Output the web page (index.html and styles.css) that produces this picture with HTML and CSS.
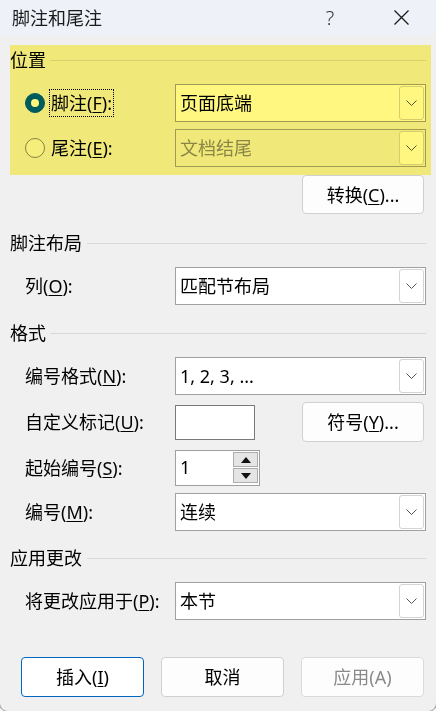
FILE: index.html
```html
<!DOCTYPE html>
<html lang="zh-CN">
<head>
<meta charset="utf-8">
<title>脚注和尾注</title>
<link rel="stylesheet" href="styles.css">
</head>
<body>
<div class="dialog">
  <div class="titlebar">
    <div class="title">脚注和尾注</div>
    <div class="help">?</div>
    <svg class="close" width="15" height="15" viewBox="0 0 15 15"><path d="M0.5 0.5 L14.5 14.5 M14.5 0.5 L0.5 14.5" stroke="#1a1a1a" stroke-width="1.3" fill="none"/></svg>
  </div>

  <div class="content">
    <div class="group highlight">
      <div class="heading"><span>位置</span><i class="rule"></i></div>
      <div class="row first">
        <div class="label radio-label">
          <span class="radio checked"></span>
          <span class="focus">脚注(<u>F</u>):</span>
        </div>
        <div class="combo"><span class="value">页面底端</span><span class="arrow"><svg width="11" height="6" viewBox="0 0 11 6"><polyline points="0.5,0.5 5.5,5.5 10.5,0.5" fill="none" stroke="#555" stroke-width="1"/></svg></span></div>
      </div>
      <div class="row">
        <div class="label radio-label">
          <span class="radio"></span>
          <span class="nofocus">尾注(<u>E</u>):</span>
        </div>
        <div class="combo disabled"><span class="value">文档结尾</span><span class="arrow"><svg width="11" height="6" viewBox="0 0 11 6"><polyline points="0.5,0.5 5.5,5.5 10.5,0.5" fill="none" stroke="#555" stroke-width="1"/></svg></span></div>
      </div>
    </div>

    <div class="btnrow"><button class="btn">转换(<u>C</u>)...</button></div>

    <div class="heading h2"><span>脚注布局</span><i class="rule"></i></div>
    <div class="row first">
      <div class="label">列(<u>O</u>):</div>
      <div class="combo"><span class="value">匹配节布局</span><span class="arrow"><svg width="11" height="6" viewBox="0 0 11 6"><polyline points="0.5,0.5 5.5,5.5 10.5,0.5" fill="none" stroke="#555" stroke-width="1"/></svg></span></div>
    </div>

    <div class="heading h3"><span>格式</span><i class="rule"></i></div>
    <div class="row first">
      <div class="label">编号格式(<u>N</u>):</div>
      <div class="combo"><span class="value">1, 2, 3, ...</span><span class="arrow"><svg width="11" height="6" viewBox="0 0 11 6"><polyline points="0.5,0.5 5.5,5.5 10.5,0.5" fill="none" stroke="#555" stroke-width="1"/></svg></span></div>
    </div>
    <div class="row mark">
      <div class="label">自定义标记(<u>U</u>):</div>
      <div class="textbox"></div>
      <button class="btn symbol">符号(<u>Y</u>)...</button>
    </div>
    <div class="row spinrow">
      <div class="label">起始编号(<u>S</u>):</div>
      <div class="spinner">
        <span class="value">1</span>
        <span class="spins">
          <span class="spin"><svg width="10" height="6" viewBox="0 0 10 6"><polygon points="0,6 10,6 5,0" fill="#111"/></svg></span>
          <span class="spin"><svg width="10" height="6" viewBox="0 0 10 6"><polygon points="0,0 10,0 5,6" fill="#111"/></svg></span>
        </span>
      </div>
    </div>
    <div class="row">
      <div class="label">编号(<u>M</u>):</div>
      <div class="combo"><span class="value">连续</span><span class="arrow"><svg width="11" height="6" viewBox="0 0 11 6"><polyline points="0.5,0.5 5.5,5.5 10.5,0.5" fill="none" stroke="#555" stroke-width="1"/></svg></span></div>
    </div>

    <div class="heading h4"><span>应用更改</span><i class="rule"></i></div>
    <div class="row first">
      <div class="label">将更改应用于(<u>P</u>):</div>
      <div class="combo"><span class="value">本节</span><span class="arrow"><svg width="11" height="6" viewBox="0 0 11 6"><polyline points="0.5,0.5 5.5,5.5 10.5,0.5" fill="none" stroke="#555" stroke-width="1"/></svg></span></div>
    </div>

    <div class="footer">
      <button class="btn fbtn default">插入(<u>I</u>)</button>
      <button class="btn fbtn">取消</button>
      <button class="btn fbtn disabled">应用(A)</button>
    </div>
  </div>
</div>
</body>
</html>
```

FILE: styles.css
```css
* { box-sizing: border-box; }
html, body { margin: 0; padding: 0; background: #f8f8f8; }
body {
  font-family: "Noto Sans", "Noto Sans CJK SC", sans-serif;
  font-size: 18px;
  line-height: 24px;
  color: #000;
}
u { text-decoration-thickness: 1px; text-underline-offset: 2px; }

.dialog {
  width: 436px;
  height: 711px;
  background: #f0f0f0;
  display: flex;
  flex-direction: column;
  border-radius: 0 0 8px 8px;
  box-shadow: 0 0 0 1px #a8a8a8;
  overflow: hidden;
}

.titlebar {
  height: 35px;
  background: #eef2f8;
  display: flex;
  align-items: center;
  padding-left: 12px;
  flex: none;
}
.title { flex: 1; color: #1a1a1a; }
.help {
  width: 12px;
  text-align: center;
  font-size: 20px;
  font-weight: 300;
  color: #333;
  font-family: "Noto Sans", sans-serif;
}
.close { margin-left: 58px; margin-right: 27px; display: block; }

.content {
  padding: 0 10px;
  display: flex;
  flex-direction: column;
}

.group { position: relative; margin-top: 10px; padding: 3px 0 8px; }
.highlight::after {
  content: "";
  position: absolute;
  left: 0; right: -5px; top: 0; bottom: 0;
  background: #fff780;
  mix-blend-mode: multiply;
  pointer-events: none;
}

.heading {
  display: flex;
  align-items: center;
  gap: 4px;
  height: 24px;
}
.heading .rule { flex: 1; height: 1px; background: #d8d8d8; display: block; }
.h2 { margin-top: 17px; gap: 5px; }
.h3 { margin-top: 16px; }
.h4 { margin-top: 15px; gap: 5px; }

.row {
  display: flex;
  align-items: center;
  margin-top: 7px;
}
.row.first { margin-top: 12px; }
.label {
  width: 165px;
  padding-left: 15px;
  flex: none;
  white-space: nowrap;
}
.radio-label { display: flex; align-items: center; }
.radio {
  width: 20px; height: 20px;
  border-radius: 50%;
  border: 1px solid #868686;
  background: #f6f6f6;
  flex: none;
  margin-right: 4px;
  display: flex;
  align-items: center;
  justify-content: center;
}
.radio.checked { background: #005fb8; border-color: #005fb8; }
.radio.checked::after {
  content: "";
  width: 8px; height: 8px;
  border-radius: 50%;
  background: #fff;
}
.focus, .nofocus { padding: 1px 1px; border: 1px dotted #000; }
.nofocus { border-color: transparent; }

.combo {
  width: 251px;
  height: 38px;
  border: 1px solid #a0a0a0;
  background: #fff;
  display: flex;
  align-items: center;
}
.combo .value { flex: 1; padding-left: 4px; white-space: nowrap; }
.combo.disabled { background: #f0f0f0; color: #8a8a8a; }
.arrow {
  width: 25px;
  height: 34px;
  margin-right: 1px;
  border: 1px solid #d4d4d4;
  border-radius: 3px;
  background: #fff;
  display: flex;
  align-items: center;
  justify-content: center;
}
.arrow svg { display: block; }

.btn {
  font: inherit;
  color: inherit;
  background: #fdfdfd;
  border: 1px solid #d0d0d0;
  border-radius: 4px;
  padding: 0;
}
.btnrow { display: flex; justify-content: flex-end; padding-right: 2px; }
.btnrow .btn { width: 122px; height: 39px; }

.mark .textbox {
  width: 80px;
  height: 35px;
  border: 1px solid #7a7a7a;
  background: #fff;
}
.mark .symbol { width: 122px; height: 40px; margin-left: auto; margin-right: 2px; }
.mark { margin-top: 7px; }

.spinrow { margin-top: 8px; }
.spinner {
  width: 85px;
  height: 36px;
  border: 1px solid #a0a0a0;
  background: #fff;
  display: flex;
  align-items: flex-start;
}
.spinner .value { flex: 1; padding-left: 4px; padding-top: 4px; }
.spins {
  width: 25px;
  margin: 1px 1px 0 0;
  display: flex;
  flex-direction: column;
  gap: 1px;
}
.spin {
  height: 15px;
  background: #e5e5e5;
  border: 1px solid #adadad;
  display: flex;
  align-items: center;
  justify-content: center;
}
.spin svg { display: block; }

.footer {
  display: flex;
  gap: 17px;
  padding-left: 11px;
  margin-top: 37px;
}
.fbtn { width: 123px; height: 40px; }
.fbtn.default { border-color: #0067c0; background: #fff; }
.fbtn.disabled { color: #8a8a8a; border-color: #dadada; }
```
